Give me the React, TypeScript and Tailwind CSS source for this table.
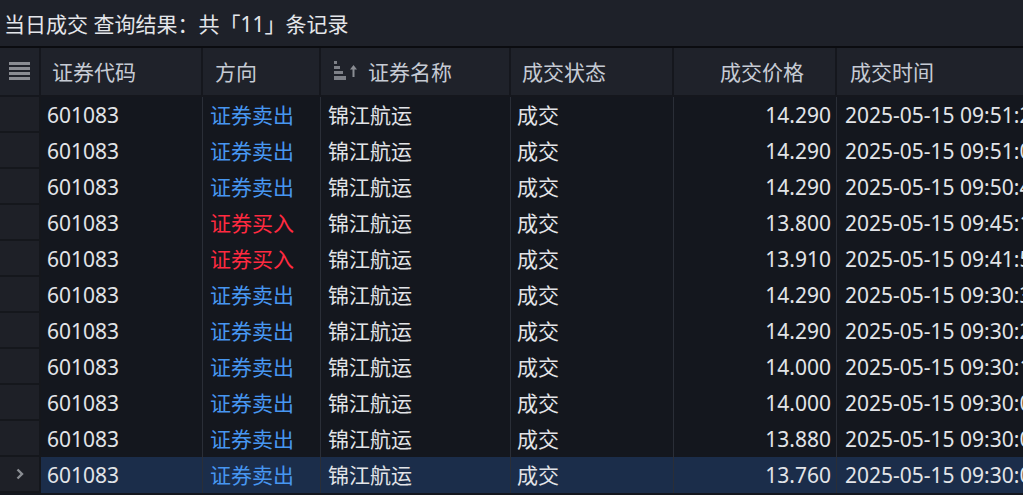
import React from 'react';

type Trade = {
  code: string;
  side: 'sell' | 'buy';
  name: string;
  status: string;
  price: string;
  time: string;
};

const trades: Trade[] = [
  { code: '601083', side: 'sell', name: '锦江航运', status: '成交', price: '14.290', time: '2025-05-15 09:51:22' },
  { code: '601083', side: 'sell', name: '锦江航运', status: '成交', price: '14.290', time: '2025-05-15 09:51:06' },
  { code: '601083', side: 'sell', name: '锦江航运', status: '成交', price: '14.290', time: '2025-05-15 09:50:41' },
  { code: '601083', side: 'buy', name: '锦江航运', status: '成交', price: '13.800', time: '2025-05-15 09:45:13' },
  { code: '601083', side: 'buy', name: '锦江航运', status: '成交', price: '13.910', time: '2025-05-15 09:41:58' },
  { code: '601083', side: 'sell', name: '锦江航运', status: '成交', price: '14.290', time: '2025-05-15 09:30:33' },
  { code: '601083', side: 'sell', name: '锦江航运', status: '成交', price: '14.290', time: '2025-05-15 09:30:21' },
  { code: '601083', side: 'sell', name: '锦江航运', status: '成交', price: '14.000', time: '2025-05-15 09:30:15' },
  { code: '601083', side: 'sell', name: '锦江航运', status: '成交', price: '14.000', time: '2025-05-15 09:30:09' },
  { code: '601083', side: 'sell', name: '锦江航运', status: '成交', price: '13.880', time: '2025-05-15 09:30:04' },
  { code: '601083', side: 'sell', name: '锦江航运', status: '成交', price: '13.760', time: '2025-05-15 09:30:01' },
];

const cols = 'grid grid-cols-[41px_162px_118px_190px_163px_163px_1fr]';

function MenuIcon() {
  return (
    <svg width="21" height="19" viewBox="0 0 21 19">
      <rect x="0" y="0" width="21" height="3" fill="#8a8d93" />
      <rect x="0" y="5" width="21" height="3" fill="#8a8d93" />
      <rect x="0" y="10" width="21" height="3" fill="#8a8d93" />
      <rect x="0" y="15" width="21" height="3" fill="#8a8d93" />
    </svg>
  );
}

function SortIcon() {
  return (
    <svg width="24" height="21" viewBox="0 0 24 21">
      <rect x="0" y="0" width="3" height="3" fill="#7d8087" />
      <rect x="0" y="5" width="6" height="3" fill="#7d8087" />
      <rect x="0" y="10" width="9" height="3" fill="#7d8087" />
      <rect x="0" y="15" width="12" height="4" fill="#7d8087" />
      <path d="M19.5 4 L16 8.5 H18.5 V16 H20.5 V8.5 H23 Z" fill="#8a8d93" />
    </svg>
  );
}

export default function App() {
  return (
    <div
      className="w-[1023px] h-[495px] overflow-hidden bg-[#14171e] text-[21px] leading-none"
      style={{ fontFamily: '"Noto Sans", "Noto Sans CJK SC", sans-serif' }}
    >
      {/* Title bar */}
      <div className="h-[48px] flex items-center px-[4px] pt-[3px] bg-[#1e2129] border-b-2 border-[#0b0c10] text-[#e4e6ea]">
        当日成交 查询结果：共「11」条记录
      </div>

      {/* Header */}
      <div className={`${cols} h-[49px] bg-[#1f222a] border-b-2 border-[#15171d] text-[#c6cbd4]`}>
        <div className="flex items-center justify-center border-r-2 border-[#15171d]">
          <MenuIcon />
        </div>
        <div className="flex items-center pl-[11px] pt-[2px] border-r-2 border-[#15171d]">证券代码</div>
        <div className="flex items-center pl-[12px] pt-[2px] border-r-2 border-[#15171d]">方向</div>
        <div className="flex items-center gap-[10px] pl-[13px] border-r-2 border-[#15171d]">
          <SortIcon />
          <span className="pt-[2px]">证券名称</span>
        </div>
        <div className="flex items-center pl-[11px] pt-[2px] border-r-2 border-[#15171d]">成交状态</div>
        <div className="flex items-center justify-end pr-[31px] pt-[2px] border-r-2 border-[#15171d]">成交价格</div>
        <div className="flex items-center pl-[13px] pt-[2px]">成交时间</div>
      </div>

      {/* Rows */}
      <div className="flex flex-col">
        {trades.map((t, i) => {
          const selected = i === trades.length - 1;
          const rowBg = selected ? 'bg-[#1b2d4a]' : 'bg-[#14171e]';
          return (
            <div key={i} className={`${cols} h-[36px] text-[#e2e4e8]`}>
              <div className="flex items-center justify-center bg-[#1e2027] border-b-2 border-r-2 border-[#15171c]">
                {selected && (
                  <svg width="8" height="12" viewBox="0 0 8 12">
                    <path d="M1.5 1.5 L6 6 L1.5 10.5" stroke="#8a8d93" strokeWidth="2.4" fill="none" />
                  </svg>
                )}
              </div>
              <div className={`${rowBg} flex items-center pl-[6px] border-r border-[#2a2e37]`}>{t.code}</div>
              <div
                className={`${rowBg} flex items-center pl-[7px] border-r border-[#2a2e37] ${
                  t.side === 'sell' ? 'text-[#4796f0]' : 'text-[#ff2a40]'
                }`}
              >
                {t.side === 'sell' ? '证券卖出' : '证券买入'}
              </div>
              <div className={`${rowBg} flex items-center pl-[7px] border-r border-[#2a2e37]`}>{t.name}</div>
              <div className={`${rowBg} flex items-center pl-[6px] border-r border-[#2a2e37]`}>{t.status}</div>
              <div className={`${rowBg} flex items-center justify-end pr-[5px] border-r border-[#2a2e37]`}>{t.price}</div>
              <div className={`${rowBg} flex items-center pl-[8px] whitespace-nowrap overflow-hidden`}>{t.time}</div>
            </div>
          );
        })}
      </div>
    </div>
  );
}
